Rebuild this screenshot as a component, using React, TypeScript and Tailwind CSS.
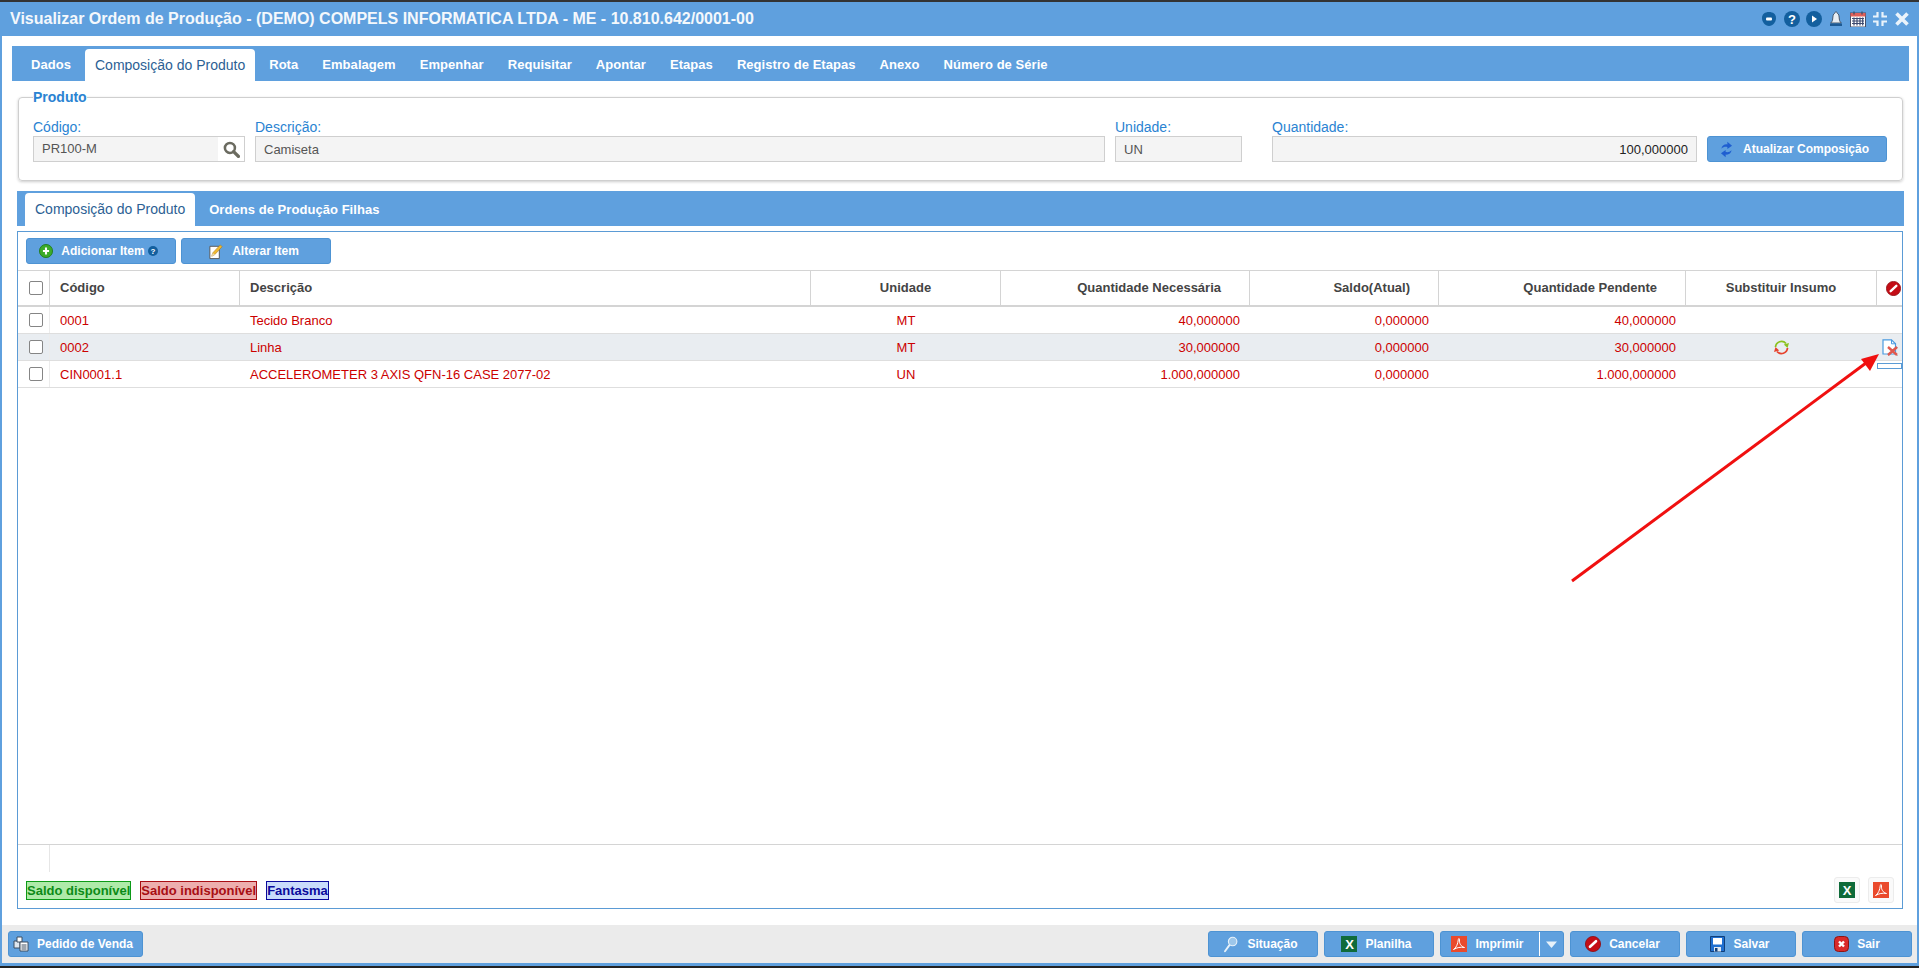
import React from "react";

const Search = () => (
  <svg width="17" height="17" viewBox="0 0 16 16"><circle cx="6.500" cy="6.500" r="4.700" fill="#fff" stroke="#6b6b60" strokeWidth="2.400" /><path d="M10 10l4.500 4.500" stroke="#6b6b60" strokeWidth="3.200" strokeLinecap="round" /></svg>
);
const Sync = () => (
  <svg width="13" height="17" viewBox="0 0 15 20" fill="none"><path d="M1.500 9C2 5.500 5 3.500 8.500 4V1l5.500 4.500L8.500 9.500V7C6 6.500 3.500 7 1.500 9z" fill="#1f5fd0" /><path d="M13.500 11C13 14.500 10 16.500 6.500 16v3L1 14.500 6.500 10.500V13c2.500.5 5 0 7-2z" fill="#1f5fd0" /></svg>
);
const Excel = () => (
  <span className="inline-flex h-[16px] w-[16px] shrink-0 items-center justify-center bg-[#0f6b3a] text-[13px] font-bold leading-none text-white">X</span>
);
const Pdf = () => (
  <svg width="16" height="16" viewBox="0 0 16 16" className="shrink-0"><rect width="16" height="16" fill="#ea4a2c" /><path d="M2.500 13.500C5 12 7 8 7.300 3.500c.1-1.500 1.400-1.300 1.200.3C8 7.500 10 10.500 13.500 11.500 9.500 10.800 6 11.500 2.500 13.500z" fill="none" stroke="#fff" strokeWidth="1" /></svg>
);
const NoEntry = ({ s = 16 }: { s?: number }) => (
  <svg width={s} height={s} viewBox="0 0 16 16" className="shrink-0"><circle cx="8" cy="8" r="7.600" fill="#c40d16" stroke="#8d0b10" strokeWidth=".8" /><path d="M5 10.800L11 5.200" stroke="#fff" strokeWidth="2.600" strokeLinecap="round" /></svg>
);

const Tab = ({ label, active }: { label: string; active?: boolean }) => (
  <div className={"flex h-full items-center rounded-t-[4px] px-[10px] " + (active ? "bg-white text-[14px] font-normal text-[#2c5f94]" : "text-[13px] font-bold tracking-[0.05px] text-white")}>{label}</div>
);

const Field = ({ label, className, children }: { label: string; className: string; children: React.ReactNode }) => (
  <div className={"flex flex-col " + className}>
    <label className="mb-[1px] h-[16px] text-[14px] leading-[16px] text-[#2a83d2]">{label}</label>
    {children}
  </div>
);

const Btn = ({ icon, label, className, pad = "pr-[5px]" }: { icon: React.ReactNode; label: React.ReactNode; className: string; pad?: string }) => (
  <button className={"flex h-[26px] items-center justify-center gap-[8px] rounded-[3px] border border-[#4d93d3] bg-[#5fa0de] text-[12px] font-bold text-white " + pad + " " + className}>
    {icon}
    <span>{label}</span>
  </button>
);

const COLS = "grid grid-cols-[32px_190px_571px_190px_249px_189px_247px_191px_25px]";

const Check = () => <span className="block h-[14px] w-[14px] rounded-[2px] border border-[#858585] bg-white" />;

const rows = [
  { c: "0001", d: "Tecido Branco", u: "MT", q: "40,000000", s: "0,000000", p: "40,000000" },
  { c: "0002", d: "Linha", u: "MT", q: "30,000000", s: "0,000000", p: "30,000000", alt: true },
  { c: "CIN0001.1", d: "ACCELEROMETER 3 AXIS QFN-16 CASE 2077-02", u: "UN", q: "1.000,000000", s: "0,000000", p: "1.000,000000" },
];

const Hd = ({ children, className = "" }: { children?: React.ReactNode; className?: string }) => (
  <div className={"flex items-center border-r border-[#d4d4d4] " + className}>{children}</div>
);

export default function App() {
  return (
    <div className="relative flex h-[968px] w-full flex-col overflow-hidden bg-white text-[13px] [font-family:'Liberation_Sans',Arial,sans-serif]">
      <div className="h-[2px] bg-[#333]" />
      <div className="flex min-h-0 flex-1 flex-col border-x-2 border-[#5fa0de]">
        <header className="flex h-[34px] items-center justify-between bg-[#5fa0de] pl-[8px] pr-[7px]">
          <h1 className="text-[16px] font-bold text-[#f4f8fc]">Visualizar Ordem de Produção - (DEMO) COMPELS INFORMATICA LTDA - ME - 10.810.642/0001-00</h1>
          <div className="flex h-[16px] items-center">
            <svg className="mr-[7px]" width="16" height="16" viewBox="0 0 16 16"><path d="M8 1c4 0 7 2 7 6 0 4-3 8-7 8s-7-4-7-8c0-4 3-6 7-6z" fill="#135f9e" /><rect x="5" y="6.500" width="6" height="3" rx="1" fill="#fff" /></svg>
            <svg className="mr-[6px]" width="16" height="16" viewBox="0 0 16 16"><circle cx="8" cy="8" r="8" fill="#135f9e" /><text x="8" y="12.500" textAnchor="middle" fontSize="13" fontWeight="700" fill="#fff" fontFamily="Liberation Sans">?</text></svg>
            <svg className="mr-[6px]" width="16" height="16" viewBox="0 0 16 16"><circle cx="8" cy="8" r="8" fill="#135f9e" /><path d="M6 4.500l5 3.500-5 3.500z" fill="#fff" /></svg>
            <svg className="mr-[6px]" width="16" height="16" viewBox="0 0 16 16"><path d="M8 1c1 0 1.300.7 1.300 1.300C11 3 11 5 11.300 8c.2 2 1 3 2 4H2.700c1-1 1.800-2 2-4C5 5 5 3 6.700 2.300 6.700 1.700 7 1 8 1z" fill="#e8eef4" stroke="#3b4a5c" strokeWidth=".9" /><rect x="2" y="12.500" width="12" height="2.500" fill="#1d5a94" /></svg>
            <svg className="mr-[6px]" width="16" height="16" viewBox="0 0 16 16"><rect x="0.500" y="2" width="15" height="14" fill="#fff" stroke="#47506a" /><rect x="0.500" y="2" width="15" height="3.500" fill="#e0605a" /><path d="M2 7.500h12M2 10h12M2 12.500h12M4 6.500v8M7 6.500v8M10 6.500v8M12.700 6.500v8" stroke="#3d4a70" strokeWidth="1.200" /><path d="M4 .5v3M12 .5v3" stroke="#47506a" strokeWidth="1.400" /></svg>
            <svg className="mr-[6px]" width="16" height="16" viewBox="0 0 16 16"><path d="M5.500 1v4.500H1M10.500 1v4.500H15M5.500 15v-4.500H1M10.500 15v-4.500H15" fill="none" stroke="#eaf3fb" strokeWidth="2.200" /></svg>
            <svg width="16" height="16" viewBox="0 0 16 16"><path d="M2.500 2.500l11 11M13.500 2.500l-11 11" stroke="#eaf3fb" strokeWidth="3.600" /></svg>
          </div>
        </header>

        <main className="flex min-h-0 flex-1 flex-col bg-white pb-[16px]">
          <nav className="ml-[10px] mr-[8px] mt-[10px] flex h-[35px] items-end gap-[4px] bg-[#5fa0de] pb-0 pl-[9px] pt-[3px]">
            <Tab label="Dados" />
            <Tab label="Composição do Produto" active />
            <Tab label="Rota" />
            <Tab label="Embalagem" />
            <Tab label="Empenhar" />
            <Tab label="Requisitar" />
            <Tab label="Apontar" />
            <Tab label="Etapas" />
            <Tab label="Registro de Etapas" />
            <Tab label="Anexo" />
            <Tab label="Número de Série" />
          </nav>

          <fieldset className="ml-[16px] mr-[14px] mt-[8px] h-[92px] rounded-[4px] border border-[#cfcfcf] pl-[14px] pr-[15px] shadow-[0_1px_3px_rgba(0,0,0,0.2)]">
            <legend className="h-[16px] text-[14px] font-bold leading-[16px] text-[#2a83d2]">Produto</legend>
            <div className="mt-[14px] flex">
              <Field label="Código:" className="w-[212px]">
                <div className="flex h-[26px] border border-[#cfcfcf] bg-[#f4f4f4]">
                  <input readOnly value="PR100-M" className="min-w-0 flex-1 bg-transparent pl-[8px] text-[13px] text-[#555] outline-none" />
                  <span className="flex w-[26px] items-center justify-center bg-white"><Search /></span>
                </div>
              </Field>
              <Field label="Descrição:" className="ml-[10px] w-[850px]">
                <input readOnly value="Camiseta" className="h-[26px] border border-[#cfcfcf] bg-[#f4f4f4] pl-[8px] text-[13px] text-[#555] outline-none" />
              </Field>
              <Field label="Unidade:" className="ml-[10px] w-[127px]">
                <input readOnly value="UN" className="h-[26px] w-full border border-[#cfcfcf] bg-[#f4f4f4] pl-[8px] text-[13px] text-[#555] outline-none" />
              </Field>
              <Field label="Quantidade:" className="ml-[30px] w-[425px]">
                <input readOnly value="100,000000" className="h-[26px] w-full border border-[#cfcfcf] bg-[#f4f4f4] pr-[8px] text-right text-[13px] text-[#222] outline-none" />
              </Field>
              <div className="ml-[10px] mt-[17px]">
                <Btn icon={<Sync />} label="Atualizar Composição" className="w-[180px] gap-[10px]" />
              </div>
            </div>
          </fieldset>

          <nav className="ml-[15px] mr-[13px] mt-[10px] flex h-[35px] items-end gap-[4px] bg-[#5fa0de] pl-[8px] pt-[2px]">
            <Tab label="Composição do Produto" active />
            <Tab label="Ordens de Produção Filhas" />
          </nav>

          <section className="relative ml-[15px] mr-[14px] mt-[5px] flex min-h-0 flex-1 flex-col border border-[#5b9bd5]">
            <div className="flex gap-[5px] pl-[8px] pt-[6px]">
              <Btn
                className="w-[150px]"
                icon={<svg width="14" height="14" viewBox="0 0 16 16"><circle cx="8" cy="8" r="7.500" fill="#3cab2a" stroke="#1f7a1d" /><path d="M8 4v8M4.500 8h7" stroke="#fff" strokeWidth="2.400" /></svg>}
                label={<span className="inline-flex items-center gap-[3px]">Adicionar Item<svg width="10" height="10" viewBox="0 0 10 10"><circle cx="5" cy="5" r="5" fill="#135f9e" /><text x="5" y="8" textAnchor="middle" fontSize="8" fontWeight="700" fill="#fff" fontFamily="Liberation Sans">?</text></svg></span>}
              />
              <Btn
                className="w-[150px]"
                icon={<svg width="16" height="17" viewBox="0 0 16 18"><path d="M1.500 3.500h10v13h-10z" fill="#fff" stroke="#555" /><path d="M3.500 14l1-3.500L12.500 2l2 2-8 8.500z" fill="#f0b92f" stroke="#a9761a" strokeWidth=".6" /><path d="M3.500 14l1-3.500 2.500 2z" fill="#e8d9b0" /></svg>}
                label="Alterar Item"
              />
            </div>

            <div className={COLS + " mt-[6px] h-[37px] border-y border-y-[#d4d4d4] border-b-2 text-[13px] font-bold text-[#444]"}>
              <Hd className="pl-[11px]"><Check /></Hd>
              <Hd className="pl-[10px]">Código</Hd>
              <Hd className="pl-[10px]">Descrição</Hd>
              <Hd className="justify-center">Unidade</Hd>
              <Hd className="justify-end pr-[28px]">Quantidade Necessária</Hd>
              <Hd className="justify-end pr-[28px]">Saldo(Atual)</Hd>
              <Hd className="justify-end pr-[28px]">Quantidade Pendente</Hd>
              <Hd className="justify-center">Substituir Insumo</Hd>
              <div className="flex items-center justify-end pr-[1px]"><NoEntry s={15} /></div>
            </div>

            {rows.map((r) => (
              <div key={r.c} className={COLS + " h-[27px] items-stretch border-b border-[#dedede] text-[13px] text-[#cc0000] " + (r.alt ? "bg-[#e9edf1]" : "")}>
                <div className="flex items-center border-r border-[#ececec] pl-[11px]"><Check /></div>
                <div className="flex items-center pl-[10px] pt-[1px]">{r.c}</div>
                <div className="flex items-center pl-[10px] pt-[1px]">{r.d}</div>
                <div className="flex items-center justify-center pt-[1px]">{r.u}</div>
                <div className="flex items-center justify-end pr-[10px] pt-[1px]">{r.q}</div>
                <div className="flex items-center justify-end pr-[10px] pt-[1px]">{r.s}</div>
                <div className="flex items-center justify-end pr-[10px] pt-[1px]">{r.p}</div>
                <div className="flex items-center justify-center">
                  {r.alt && (
                    <svg width="17" height="17" viewBox="0 0 17 17" fill="none"><path d="M2.500 8A6 6 0 0 1 13 4.500" stroke="#8cc21f" strokeWidth="1.800" /><path d="M10.800 5.500L16 4l-1.500 5z" fill="#8cc21f" /><path d="M14.500 9A6 6 0 0 1 4 12.500" stroke="#e6432e" strokeWidth="1.800" /><path d="M6.200 11.500L1 13l1.500-5z" fill="#e6432e" /></svg>
                  )}
                </div>
                <div className="flex items-center justify-center">
                  {r.alt && (
                    <svg width="16" height="17" viewBox="0 0 16 17" fill="none"><path d="M1 .8h8.500l4 4V15H1z" fill="#fff" stroke="#4a9be0" strokeWidth="1.200" /><path d="M9.500 .8v4h4" stroke="#4a9be0" /><path d="M6 8l9 8M15 8l-9 8" stroke="#8a8a8a" strokeWidth="1" transform="translate(.5 .5)" /><path d="M6 8l9 8M15 8l-9 8" stroke="#e0584e" strokeWidth="2.400" /></svg>
                  )}
                </div>
              </div>
            ))}

            <div className="absolute right-0 top-[131px] h-[6px] w-[25px] border border-[#5b9bd5] bg-white" />

            <div className="flex-1" />

            <div className="h-[64px] border-t border-[#d4d4d4]">
              <div className="h-[27px] w-[32px] border-r border-[#e6e6e6]" />
              <div className="flex items-start justify-between pl-[8px] pr-[8px]">
                <div className="mt-[9px] flex gap-[9px] text-[13px] font-bold leading-[17px]">
                  <span className="border border-[#0c9a17] bg-[#aeeaa9] text-[#0c8a17]">Saldo disponível</span>
                  <span className="border border-[#a80e14] bg-[#edaeae] text-[#a80e14]">Saldo indisponível</span>
                  <span className="border border-[#0a0a9c] bg-[#c9dcfb] text-[#0a0a9c]">Fantasma</span>
                </div>
                <div className="mt-[5px] flex gap-[8px]">
                  <span className="flex h-[26px] w-[26px] items-center justify-center rounded-[3px] border border-[#ececec] bg-[#fafafa]"><Excel /></span>
                  <span className="flex h-[26px] w-[26px] items-center justify-center rounded-[3px] border border-[#ececec] bg-[#fafafa]"><Pdf /></span>
                </div>
              </div>
            </div>
          </section>
        </main>

        <footer className="flex h-[38px] items-center justify-between bg-[#ebebeb] pl-[6px] pr-[5px]">
          <Btn
            className="w-[135px] gap-[8px]"
            icon={<svg width="16" height="16" viewBox="0 0 16 16"><path d="M1 5h6v7H1z" fill="#dfe7ef" stroke="#3f4f60" /><path d="M4 1h5v5H4z" fill="#fff" stroke="#3f4f60" /><path d="M7 6h8v9H7z" fill="#fff" stroke="#3f4f60" /><path d="M8.500 9h5M8.500 11h5M8.500 13h5" stroke="#3f4f60" /></svg>}
            label="Pedido de Venda"
          />
          <div className="flex gap-[6px]">
            <Btn className="w-[110px]" icon={<svg width="15" height="17" viewBox="0 0 17 20" className="mr-[1px]"><circle cx="11" cy="6.500" r="5" fill="#9cc6ea" stroke="#e8f2fa" strokeWidth="1.300" /><path d="M7 11L2 18" stroke="#e8f2fa" strokeWidth="2.200" strokeLinecap="round" /></svg>} label="Situação" />
            <Btn className="w-[110px]" icon={<Excel />} label="Planilha" />
            <div className="flex h-[26px] w-[124px] rounded-[3px] border border-[#4d93d3] bg-[#5fa0de] text-[12px] font-bold text-white">
              <span className="flex flex-1 items-center justify-center gap-[8px] pr-[5px]"><Pdf />Imprimir</span>
              <span className="flex w-[24px] items-center justify-center border-l border-white"><svg width="11" height="7" viewBox="0 0 11 7"><path d="M0 .5h11L5.500 7z" fill="#e8f2fa" /></svg></span>
            </div>
            <Btn className="w-[110px]" icon={<NoEntry />} label="Cancelar" />
            <Btn className="w-[110px]" pad="pr-[2px]" icon={<svg width="15" height="16" viewBox="0 0 15 16"><path d="M.5.5h14v15H.5z" fill="#1f6fd0" stroke="#113f7a" /><path d="M3 2h9v6.500H3z" fill="#fff" /><path d="M4 11h7v4.500H4z" fill="#dfe7ef" /><rect x="5" y="12" width="2.500" height="3.500" fill="#113f7a" /></svg>} label="Salvar" />
            <Btn className="w-[110px]" pad="pr-0" icon={<svg width="15" height="16" viewBox="0 0 15 16"><rect x=".5" y=".5" width="14" height="15" rx="4" fill="#d92a2a" stroke="#8d1414" /><path d="M5 5.500l5 5M10 5.500l-5 5" stroke="#fff" strokeWidth="2.400" /></svg>} label="Sair" />
          </div>
        </footer>
      </div>
      <div className="h-[3px] bg-[#5fa0de]" />
      <div className="h-[2px] bg-[#222]" />

      <svg className="pointer-events-none absolute left-0 top-0" width="1919" height="968" viewBox="0 0 1919 968" fill="none">
        <path d="M1572 581L1866 363" stroke="#f01010" strokeWidth="3" />
        <path d="M1879 354L1861 359L1870 371z" fill="#f01010" />
      </svg>
    </div>
  );
}
